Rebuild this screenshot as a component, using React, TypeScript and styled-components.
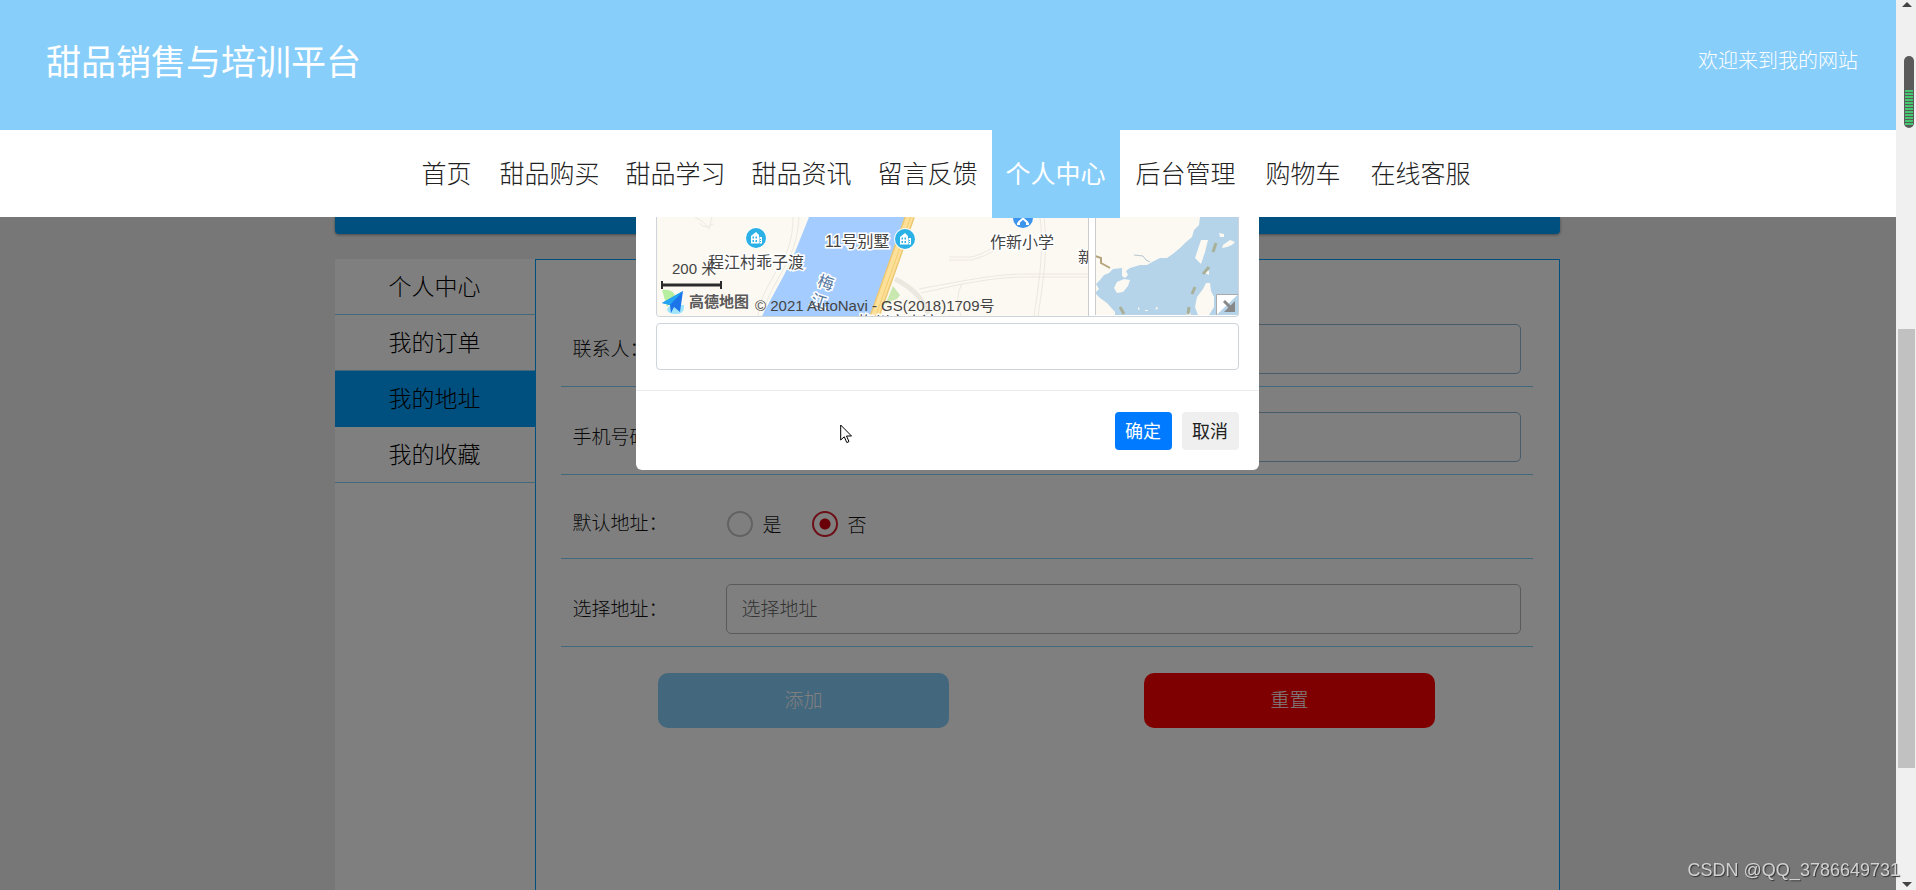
import React, { useState } from "react";
import styled, { createGlobalStyle, css } from "styled-components";

const sky = "#87cefa";
const blue = "#00a0ff";
const sans = `"Liberation Sans", "Noto Sans CJK SC", sans-serif`;

const GlobalStyle = createGlobalStyle`
  *, *::before, *::after { box-sizing: border-box; }
  body {
    margin: 0;
    background: #eee;
    color: #111;
    font-family: "Noto Sans CJK SC", sans-serif;
    font-size: 19px;
    line-height: 28px;
  }
  button, input { font: inherit; color: inherit; margin: 0; }
`;

const Window = styled.div`
  display: flex;
  min-height: 100vh;
`;

const Page = styled.div`
  flex: 1;
  min-width: 0;
  display: flex;
  flex-direction: column;
`;

const Header = styled.header`
  display: flex;
  align-items: center;
  justify-content: space-between;
  height: 130px;
  padding: 0 38px 10px 46px;
  background: ${sky};
  color: #fff;
`;

const SiteName = styled.h1`
  margin: 0;
  font-size: 35px;
  line-height: 48px;
  font-weight: 400;
`;

const Welcome = styled.span`
  font-size: 20px;
  font-weight: 300;
`;

const Nav = styled.nav`
  position: relative;
  z-index: 2;
  display: flex;
  justify-content: center;
  gap: 2px;
  height: 87px;
  padding-right: 4px;
  background: #fff;
`;

const NavLink = styled.a<{ $tight?: boolean; $active?: boolean }>`
  height: 88px;
  padding: 0 ${(p) => (p.$tight ? 12 : 14)}px;
  font-size: 25px;
  line-height: 84px;
  font-weight: 300;
  color: #222;
  text-decoration: none;
  ${(p) =>
    p.$active &&
    css`
      background: ${sky};
      color: #fff;
      font-weight: 400;
    `}
`;

const Stage = styled.div`
  position: relative;
  flex: 1;
  display: flex;
  flex-direction: column;
  padding-right: 2px;
`;

const Container = styled.main`
  flex: 1;
  display: flex;
  flex-direction: column;
  gap: 25px;
  width: 100%;
  max-width: 1225px;
  margin: 0 auto;
`;

const Banner = styled.div`
  height: 17px;
  border-radius: 0 0 4px 4px;
  background: ${blue};
  box-shadow: 0 1px 3px rgba(0, 0, 0, 0.4);
`;

const Columns = styled.div`
  flex: 1;
  display: flex;
`;

const Sidebar = styled.aside`
  width: 200px;
  background: #fff;
`;

const SideLink = styled.a<{ $active?: boolean }>`
  display: block;
  height: 56px;
  border-bottom: 1px solid ${(p) => (p.$active ? blue : sky)};
  background: ${(p) => (p.$active ? blue : "transparent")};
  color: #000;
  font-size: 23px;
  line-height: 52px;
  font-weight: 300;
  text-align: center;
  text-decoration: none;
`;

const Panel = styled.form`
  flex: 1;
  padding: 39px 26px 25px 25px;
  border: 1px solid ${blue};
  border-bottom: 0;
  background: #fff;
`;

const Row = styled.div`
  display: flex;
  align-items: center;
  padding: 25px 12px 12px;
  border-bottom: 1px solid ${sky};
  font-weight: 300;
`;

const RowLabel = styled.label`
  width: 153px;
  padding-bottom: 3px;
`;

const TextField = styled.input<{ $plain?: boolean }>`
  flex: 1;
  min-width: 0;
  height: 50px;
  padding: 0 15px 3px;
  border: 1px solid ${(p) => (p.$plain ? "#b4b4b4" : "#92b8d2")};
  border-radius: 5px;
  background: #fff;
  font-weight: 300;
  outline: none;
  &::placeholder {
    color: #666;
    opacity: 1;
  }
`;

const Choices = styled.div`
  display: flex;
  align-items: center;
  gap: 30px;
  height: 46px;
  padding: 2px 0 0 1px;
`;

const Choice = styled.label`
  display: flex;
  align-items: center;
  gap: 10px;
`;

const Radio = styled.input`
  appearance: none;
  width: 26px;
  height: 26px;
  border: 2px solid #c4c4c4;
  border-radius: 50%;
  background: #fff;
  &:checked {
    border-color: #d81e2c;
    background: radial-gradient(circle, #d40010 5px, #fff 6px);
  }
`;

const Actions = styled.div`
  display: flex;
  justify-content: space-around;
  padding-top: 26px;
`;

const ActionButton = styled.button<{ $danger?: boolean }>`
  width: 30%;
  height: 55px;
  padding: 0 0 3px;
  border: 0;
  border-radius: 10px;
  background: ${(p) => (p.$danger ? "#f00" : sky)};
  color: #fff;
  font-weight: 300;
`;

const Overlay = styled.div`
  position: absolute;
  inset: 0;
  display: flex;
  justify-content: center;
  align-items: flex-start;
  padding-right: 2px;
  background: rgba(0, 0, 0, 0.5);
`;

const Dialog = styled.section`
  width: 623px;
  border-radius: 0 0 6px 6px;
  background: #fff;
`;

const DialogBody = styled.div`
  display: flex;
  flex-direction: column;
  gap: 6px;
  padding: 0 20px 20px;
`;

const DialogField = styled.input`
  width: 100%;
  height: 47px;
  padding: 0 12px;
  border: 1px solid #ced4da;
  border-radius: 4px;
  outline: none;
`;

const DialogFooter = styled.footer`
  display: flex;
  justify-content: flex-end;
  gap: 10px;
  padding: 21px 20px 20px;
  border-top: 1px solid #e9ecef;
`;

const DialogButton = styled.button<{ $primary?: boolean }>`
  width: 57px;
  height: 38px;
  padding: 0 0 3px;
  border: 0;
  border-radius: 4px;
  background: ${(p) => (p.$primary ? "#007bff" : "#efefef")};
  color: ${(p) => (p.$primary ? "#fff" : "#222")};
  font-size: 18px;
`;

const MapFrame = styled.div`
  display: flex;
  justify-content: space-between;
  height: 100px;
  border: 1px solid #ced4da;
  border-top: 0;
  border-radius: 0 0 4px 4px;
  overflow: hidden;
`;

const Pointer = styled.svg`
  position: absolute;
  left: calc(50% - 108px);
  top: 207px;
`;

const ScrollTrack = styled.div`
  position: sticky;
  top: 0;
  display: flex;
  flex-direction: column;
  align-items: center;
  justify-content: space-between;
  width: 20px;
  height: 100vh;
  padding: 2px 1px 3px 2px;
  background: #f0f0f0;
`;

const ScrollSpace = styled.div<{ $share: number }>`
  flex: ${(p) => p.$share} 0 0;
`;

const ScrollThumb = styled.div`
  flex: 440 0 0;
  width: 100%;
  background: #c1c1c1;
`;

const LevelMeter = styled.svg`
  position: fixed;
  z-index: 3;
  top: 56px;
  right: 2px;
`;

const Watermark = styled.div`
  position: fixed;
  z-index: 3;
  right: 16px;
  bottom: 6px;
  color: #d2d2d2;
  font-family: ${sans};
  font-size: 18px;
  text-shadow: 1px 1px 1px #333;
`;

const Poi = ({ x, y }: { x: number; y: number }) => (
  <g transform={`translate(${x} ${y})`}>
    <circle r="11" fill="#fff" opacity="0.8" />
    <circle r="10" fill="#2bb1e6" />
    <path d="M-5 5.500V-2L0-6L3-3V5.500Z" fill="#fff" />
    <path d="M3.500-1H6V5.500H3.500Z" fill="#fff" />
    <path
      d="M-3.500-1.500h1.500v2H-3.500zM-0.500-1.500h1.500v2h-1.500zM-3.500 2h1.500v2H-3.500zM-0.500 2h1.500v2h-1.500zM4 1h1v1h-1zM4 3h1v1h-1z"
      fill="#2bb1e6"
    />
  </g>
);

const halo = { stroke: "#fff", strokeWidth: 3, paintOrder: "stroke" } as const;

const StreetMap = () => (
  <svg width="432" height="99" viewBox="0 0 432 99" fontFamily={sans} fontSize="16" fill="#444">
    <rect width="432" height="99" fill="#fcf9f2" />
    <g fill="none" stroke="#ebe8e0" strokeWidth="1">
      <path d="M136 0C136 30 126 42 116 60S103 84 101 99M142 0C140 30 132 42 121 62S109 84 107 99" />
      <path d="M38 0q10 5 14 12l3-12M56 7q-8 6-14-1" />
      <path d="M433 57H370C342 57 325 61 305 64L262 72M433 60H370C342 60 325 64 305 67L264 76" />
      <path d="M387 0C391 30 387 60 381 99M383 0C387 30 383 60 377 99" />
      <path d="M292 43H315Q340 36 352 21M292 40H315Q336 34 348 20M305 67Q297 80 304 99" />
      <path d="M238 62Q265 75 272 99" strokeWidth="5" />
    </g>
    <path d="M233 76l3-7 7 9-3 4q-8 2-12 6z" fill="#c9e8b0" />
    <path d="M152 0H248L214 99H105Q116 78 126 60Q137 39 142 25Z" fill="#a5ccff" />
    <path d="M253-1L238 42L217 101" fill="none" stroke="#edc873" strokeWidth="10" />
    <path d="M253-1L238 42L217 101" fill="none" stroke="#fde09a" strokeWidth="7" />
    <path d="M254-1L239 42L218 101" fill="none" stroke="#f3cc70" strokeWidth="1" />
    <text x="201" y="111" {...halo}>梅州市小湾</text>
    <Poi x={99} y={21} />
    <Poi x={248} y={22} />
    <circle cx="366" cy="1" r="10" fill="#3d94ef" />
    <path d="M361 6L371-3M361-3L371 6M360 7h3M369 7h3" stroke="#fff" strokeWidth="2" fill="none" />
    <text x="51" y="51" {...halo}>程江村乖子渡</text>
    <text x="168" y="30" {...halo}>11号别墅</text>
    <text x="333" y="31" {...halo}>作新小学</text>
    <text x="421" y="46" {...halo}>新</text>
    <g fill="#54779f" textAnchor="middle">
      <text transform="translate(167 71) rotate(18)" {...halo}>梅</text>
      <text transform="translate(160 90) rotate(18)" {...halo}>江</text>
    </g>
    <text x="15" y="57" fontSize="15">200 米</text>
    <path d="M5 68H64" stroke="#2b2b2b" strokeWidth="3" />
    <path d="M5 64V72M64 64V72" stroke="#2b2b2b" strokeWidth="2" />
    <path d="M5 73q10-1 13 5l-8 12z" fill="#b7efa0" />
    <path d="M13 88l14 0q1 9-8 9t-9-5z" fill="#9fe4fb" />
    <path d="M5 86L26 74L23 95L17 90L14 96L13 88Z" fill="#1b74e8" />
    <path d="M26 74L13 88L5 86Z" fill="#23a4f5" />
    <text x="32" y="90" fontSize="15" fontWeight="700" fill="#5a5a5a">高德地图</text>
    <text x="98" y="94" fontSize="15">© 2021 AutoNavi - GS(2018)1709号</text>
    <path d="M431.500 0V99" stroke="#ccc" />
  </svg>
);

const OverviewMap = () => (
  <svg width="143" height="98" viewBox="0 0 143 98">
    <rect width="143" height="98" fill="#b5d4e9" />
    <g fill="#fcf9f2">
      <path d="M0 0H105L104 8L99 13L97 20L90 26L85 31L79 36L72 41L65 41L59 44L52 48L45 48L35 51L31 54L33 58L30 61L27 59L27 51L18 52L14 56L9 58L5 63L1 67L4 72L0 76Z" />
      <path d="M19 71l3-6 7-3 6 1-2 6-5 6-6 1z" />
      <path d="M106 23h7l-3 12-4 12-6-6z" />
      <path d="M0 76l5 5 7 5 8 9v3H0z" />
      <path d="M111 66l4 0 1 8 3 6 0 10-5 8h-11l-3-8 2-10 6-8z" />
      <path d="M110 52l4 2v4l-4-2zM124 16l5 1v3h-4zM135 23l5 2-3 3-5 2-5 1 1-3zM43 90l2 2-2 1zM60 91l3-1-1 3zM50 93h3v1h-3zM90 97l5-2 1 3z" />
    </g>
    <path d="M0 39l6 2 0 5 9 5" fill="none" stroke="#b6a47e" strokeWidth="2" />
    <path d="M39 38l9 1 3 4 4 2" fill="none" stroke="#b8c6ce" strokeWidth="1" />
    <g stroke="#a9b09a" strokeWidth="3">
      <path d="M121 26l-3 9M114 50l-6 7M100 70l-3 7M25 90l4 7M94 90l-1 7" />
    </g>
    <path d="M121.500 98V77.500H143" fill="#fff" stroke="#aaa" />
    <path d="M129 84L137 92" stroke="#888" strokeWidth="3" />
    <path d="M140 84V95H129Z" fill="#888" />
    <path d="M0.500 0V98" stroke="#ccc" />
  </svg>
);

const navItems = [
  { text: "首页" },
  { text: "甜品购买", tight: true },
  { text: "甜品学习", tight: true },
  { text: "甜品资讯", tight: true },
  { text: "留言反馈", tight: true },
  { text: "个人中心", active: true },
  { text: "后台管理" },
  { text: "购物车" },
  { text: "在线客服" },
];

const sideItems = ["个人中心", "我的订单", "我的地址", "我的收藏"];

export default function App() {
  const [isDefault, setIsDefault] = useState("否");

  return (
    <>
      <GlobalStyle />
      <Window>
        <Page>
          <Header>
            <SiteName>甜品销售与培训平台</SiteName>
            <Welcome>欢迎来到我的网站</Welcome>
          </Header>
          <Nav>
            {navItems.map((item) => (
              <NavLink key={item.text} href="#" $tight={item.tight} $active={item.active}>
                {item.text}
              </NavLink>
            ))}
          </Nav>
          <Stage>
            <Container>
              <Banner />
              <Columns>
                <Sidebar>
                  {sideItems.map((text) => (
                    <SideLink key={text} href="#" $active={text === "我的地址"}>
                      {text}
                    </SideLink>
                  ))}
                </Sidebar>
                <Panel onSubmit={(e) => e.preventDefault()}>
                  <Row>
                    <RowLabel htmlFor="contact">联系人：</RowLabel>
                    <TextField id="contact" />
                  </Row>
                  <Row>
                    <RowLabel htmlFor="phone">手机号码：</RowLabel>
                    <TextField id="phone" />
                  </Row>
                  <Row>
                    <RowLabel as="span">默认地址：</RowLabel>
                    <Choices role="radiogroup" aria-label="默认地址">
                      {["是", "否"].map((value) => (
                        <Choice key={value}>
                          <Radio
                            type="radio"
                            name="default"
                            checked={isDefault === value}
                            onChange={() => setIsDefault(value)}
                          />
                          {value}
                        </Choice>
                      ))}
                    </Choices>
                  </Row>
                  <Row>
                    <RowLabel htmlFor="address">选择地址：</RowLabel>
                    <TextField id="address" placeholder="选择地址" $plain />
                  </Row>
                  <Actions>
                    <ActionButton type="submit">添加</ActionButton>
                    <ActionButton type="reset" $danger>
                      重置
                    </ActionButton>
                  </Actions>
                </Panel>
              </Columns>
            </Container>
            <Overlay>
              <Dialog role="dialog" aria-label="选择地址">
                <DialogBody>
                  <MapFrame>
                    <StreetMap />
                    <OverviewMap />
                  </MapFrame>
                  <DialogField aria-label="地址" />
                </DialogBody>
                <DialogFooter>
                  <DialogButton type="button" $primary>
                    确定
                  </DialogButton>
                  <DialogButton type="button">取消</DialogButton>
                </DialogFooter>
              </Dialog>
              <Pointer width="13" height="20" viewBox="0 0 13 20">
                <path
                  d="M0.700 1V16L4.300 12.800L6.800 18.600L9 17.600L6.500 12H11.500Z"
                  fill="#fff"
                  stroke="#000"
                  strokeWidth="1"
                />
              </Pointer>
            </Overlay>
          </Stage>
        </Page>
        <ScrollTrack>
          <svg width="10" height="5" viewBox="0 0 10 5">
            <path d="M0 5L5 0L10 5Z" fill="#444" />
          </svg>
          <ScrollSpace $share={322} />
          <ScrollThumb />
          <ScrollSpace $share={114} />
          <svg width="10" height="5" viewBox="0 0 10 5">
            <path d="M0 0L5 5L10 0Z" fill="#444" />
          </svg>
        </ScrollTrack>
      </Window>
      <LevelMeter width="10" height="72" viewBox="0 0 10 72">
        <rect width="10" height="72" rx="5" fill="#5a5a5a" />
        {Array.from({ length: 12 }, (_, i) => (
          <rect key={i} x="1" y={34 + i * 3} width="8" height="2" fill="#44c76f" />
        ))}
      </LevelMeter>
      <Watermark>CSDN @QQ_3786649731</Watermark>
    </>
  );
}
